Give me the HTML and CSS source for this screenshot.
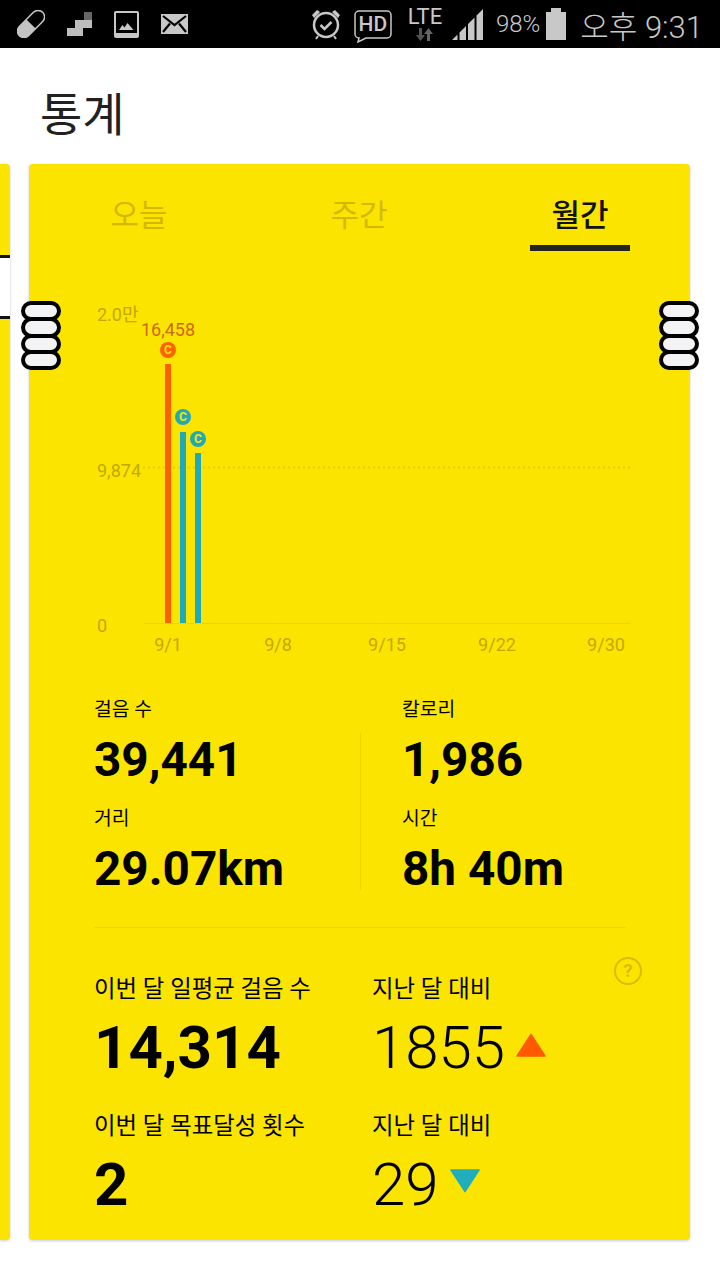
FILE: index.html
```html
<!DOCTYPE html>
<html lang="ko">
<head>
<meta charset="utf-8">
<title>통계</title>
<link rel="stylesheet" href="styles.css">
</head>
<body>
<div class="statusbar">
  <div class="status-left">
    <svg class="ic" width="28" height="28" viewBox="0 0 28 28"><g transform="rotate(-45 14 14)"><rect x="-2.500" y="7.500" width="33" height="13" rx="6.500" fill="none" stroke="#c8c8c8" stroke-width="1.500"/><path d="M14 7.500H4a6.500 6.500 0 0 0 0 13h10z" fill="#c4c4c4"/></g></svg>
    <svg class="ic" width="25" height="24" viewBox="0 0 25 24"><rect x="17" y="0" width="8" height="8" fill="#666"/><path d="M8 8h17v8h-9v8H0v-8h8z" fill="#bdbdbd"/></svg>
    <svg class="ic" width="25" height="27" viewBox="0 0 25 27"><rect x="1" y="1" width="23" height="25" rx="1" fill="none" stroke="#c8c8c8" stroke-width="2"/><rect x="1" y="22" width="23" height="4" fill="#c8c8c8"/><path d="M5 19l3.500-5 2 2.500 3-4.500 6 7z" fill="#c8c8c8"/></svg>
    <svg class="ic" width="27" height="20" viewBox="0 0 27 20"><rect width="27" height="20" fill="#c8c8c8"/><path d="M2 2l11.500 9L25 2M2 18l7-8.500M25 18l-7-8.500" fill="none" stroke="#000" stroke-width="2.200"/></svg>
  </div>
  <div class="status-right">
    <svg class="alarm" width="30" height="32" viewBox="0 0 30 32"><circle cx="15" cy="17" r="12" fill="none" stroke="#c8c8c8" stroke-width="2.500"/><path d="M1 7l5-5 3 2-6 6zM29 7l-5-5-3 2 6 6z" fill="#c8c8c8"/><path d="M9.500 17l4 4 7-7" fill="none" stroke="#c8c8c8" stroke-width="2.500"/><path d="M7 28l-2 3M23 28l2 3" stroke="#c8c8c8" stroke-width="2"/></svg>
    <div class="hd">
      <svg class="hd-bubble" width="38" height="33" viewBox="0 0 38 33"><path d="M5 1h28a4 4 0 0 1 4 4v19a4 4 0 0 1-4 4H12l-8 4 1-4a4 4 0 0 1-4-4V5a4 4 0 0 1 4-4z" fill="none" stroke="#c8c8c8" stroke-width="1.500"/></svg>
      <span class="hd-text">HD</span>
    </div>
    <div class="lte">
      <span class="lte-text">LTE</span>
      <svg width="17" height="13" viewBox="0 0 17 13"><path d="M4.500 13L0 7h3V0h3v7h3z" fill="#555"/><path d="M12.500 0L17 6h-3v7h-3V6H8z" fill="#666"/></svg>
    </div>
    <svg class="signal" width="31" height="31" viewBox="0 0 31 31"><path d="M0 31l5.500-5.500V31zM7.500 31v-7.500l6.500-6.500v14zM16 31V15l6.500-6.500V31zM24.500 31V6.500L31 0v31z" fill="#c8c8c8"/></svg>
    <span class="battery-pct">98%</span>
    <div class="battery"></div>
    <span class="clock">오후 9:31</span>
  </div>
</div>

<h1 class="title">통계</h1>

<div class="carousel">
  <div class="peek">
    <div class="peek-box"></div>
  </div>
  <main class="card">
    <nav class="tabs">
      <span class="tab">오늘</span>
      <span class="tab tab-mid">주간</span>
      <span class="tab tab-on">월간</span>
    </nav>

    <svg class="chart" width="661" height="400" viewBox="29 270 661 400">
      <line x1="143" y1="467.500" x2="630" y2="467.500" class="avg-line"/>
      <line x1="144" y1="623.500" x2="630" y2="623.500" class="base-line"/>
      <text x="97" y="321" class="axis">2.0만</text>
      <text x="97" y="477" class="axis">9,874</text>
      <text x="97" y="632" class="axis">0</text>
      <text x="168" y="336" class="peak" text-anchor="middle">16,458</text>
      <rect x="165" y="364" width="6" height="259" class="orange"/>
      <rect x="180" y="432" width="6" height="191" class="teal"/>
      <rect x="195" y="453" width="6" height="170" class="teal"/>
      <circle cx="168" cy="350" r="8" class="orange"/>
      <circle cx="183" cy="417" r="8" class="teal"/>
      <circle cx="198" cy="439" r="8" class="teal"/>
      <text x="168" y="354" class="coin" text-anchor="middle">C</text>
      <text x="183" y="421" class="coin" text-anchor="middle">C</text>
      <text x="198" y="443" class="coin" text-anchor="middle">C</text>
      <text x="168" y="651" class="axis" text-anchor="middle">9/1</text>
      <text x="278" y="651" class="axis" text-anchor="middle">9/8</text>
      <text x="387" y="651" class="axis" text-anchor="middle">9/15</text>
      <text x="497" y="651" class="axis" text-anchor="middle">9/22</text>
      <text x="606" y="651" class="axis" text-anchor="middle">9/30</text>
    </svg>

    <section class="totals">
      <div class="col">
        <div class="stat">
          <div class="label">걸음 수</div>
          <div class="value">39,441</div>
        </div>
        <div class="stat">
          <div class="label">거리</div>
          <div class="value">29.07km</div>
        </div>
      </div>
      <div class="vline"></div>
      <div class="col col-right">
        <div class="stat">
          <div class="label">칼로리</div>
          <div class="value">1,986</div>
        </div>
        <div class="stat">
          <div class="label">시간</div>
          <div class="value">8h 40m</div>
        </div>
      </div>
    </section>

    <section class="monthly">
      <svg class="help" width="28" height="28" viewBox="0 0 28 28"><circle cx="14" cy="14" r="13" fill="none" stroke="#d9bd00" stroke-width="2"/><text x="14" y="20" text-anchor="middle" class="help-mark">?</text></svg>
      <div class="m-row">
        <div class="m-first">
          <div class="m-label">이번 달 일평균 걸음 수</div>
          <div class="m-value">14,314</div>
        </div>
        <div>
          <div class="m-label">지난 달 대비</div>
          <div class="m-delta">1855
            <svg class="tri tri-up" width="30" height="24" viewBox="0 0 30 24"><path d="M15 1.500L29 23H1z" fill="#ff5a00" stroke="#ff5a00" stroke-width="1.500" stroke-linejoin="round"/></svg>
          </div>
        </div>
      </div>
      <div class="m-row">
        <div class="m-first">
          <div class="m-label">이번 달 목표달성 횟수</div>
          <div class="m-value">2</div>
        </div>
        <div>
          <div class="m-label">지난 달 대비</div>
          <div class="m-delta">29
            <svg class="tri tri-down" width="30" height="24" viewBox="0 0 30 24"><path d="M15 22.500L29 1H1z" fill="#20aebd" stroke="#20aebd" stroke-width="1.500" stroke-linejoin="round"/></svg>
          </div>
        </div>
      </div>
    </section>
  </main>
</div>

<div class="handle handle-left"><i></i><i></i><i></i><i></i></div>
<div class="handle handle-right"><i></i><i></i><i></i><i></i></div>
</body>
</html>
```
FILE: styles.css
```css
* { box-sizing: border-box; }

html, body { margin: 0; padding: 0; }

body {
  width: 720px;
  height: 1280px;
  position: relative;
  overflow: hidden;
  background: #fff;
  font-family: Roboto, "Noto Sans CJK KR", sans-serif;
  color: #000;
}

/* status bar */
.statusbar {
  height: 48px;
  background: #000;
  display: flex;
  justify-content: space-between;
  align-items: center;
  color: #c8c8c8;
  padding: 0 17px;
}
.status-left { display: flex; align-items: center; gap: 22px; }
.status-right { display: flex; align-items: center; }
.alarm { margin-right: 13px; }
.hd { position: relative; width: 38px; height: 33px; margin-right: 15px; margin-top: 4px; }
.hd-bubble { display: block; }
.hd-text {
  position: absolute;
  left: 0;
  top: 0;
  width: 38px;
  text-align: center;
  font-size: 21px;
  font-weight: 500;
  line-height: 29px;
}
.lte { display: flex; flex-direction: column; align-items: center; width: 36px; margin-right: 9px; }
.lte-text { font-size: 22px; font-weight: 400; line-height: 20px; }
.lte svg { margin-top: 1px; }
.signal { margin-right: 13px; }
.battery-pct { font-size: 24px; margin-right: 6px; font-weight: 300; }
.battery {
  width: 20px;
  height: 28px;
  margin-top: 4px;
  background: #c8c8c8;
  margin-right: 14px;
  position: relative;
}
.battery::before {
  content: "";
  position: absolute;
  left: 5px;
  top: -4px;
  width: 10px;
  height: 4px;
  background: #c8c8c8;
}
.clock { font-size: 31px; font-weight: 300; white-space: nowrap; }

/* page heading */
.title {
  margin: 0;
  height: 116px;
  padding: 36px 0 0 40px;
  font-size: 46px;
  line-height: 62px;
  font-weight: 400;
  color: #212121;
}

/* paged cards */
.carousel { display: flex; gap: 19px; height: 1076px; }
.peek {
  width: 10px;
  background: #fbe400;
  border-radius: 0 4px 4px 0;
  box-shadow: 0 1px 3px rgba(0,0,0,.2);
  padding-top: 91px;
}
.peek-box {
  height: 64px;
  background: #fff;
  border-top: 3px solid #111;
  border-bottom: 3px solid #111;
}
.card {
  width: 661px;
  background: #fbe400;
  border-radius: 4px;
  box-shadow: 0 1px 3px rgba(0,0,0,.2);
  display: flex;
  flex-direction: column;
}
.card > * { flex: none; }

/* tabs */
.tabs {
  height: 106px;
  padding: 24px 60px 0 50px;
  display: grid;
  grid-template-columns: 120px 1fr 100px;
}
.tab {
  font-size: 31px;
  line-height: 56px;
  height: 63px;
  font-weight: 400;
  color: #d4b800;
  text-align: center;
}
.tab-mid { padding-right: 11px; }
.tab-on { color: #111; font-weight: 500; border-bottom: 6px solid #25251f; }

/* chart */
.chart { display: block; margin-bottom: 26px; }
.axis { font-size: 18px; fill: #c2a90a; font-weight: 400; }
.peak { font-size: 18px; fill: #cf6a12; }
.coin { font-size: 12px; font-weight: 700; fill: #fbe400; }
.orange { fill: #ff6000; }
.teal { fill: #20aab8; }
.avg-line { stroke: #e6cc00; stroke-width: 2; stroke-dasharray: 2 3; }
.base-line { stroke: #eed500; stroke-width: 1; }

/* totals */
.totals {
  margin: 0 64px 0 65px;
  height: 232px;
  display: grid;
  grid-template-columns: 266px 1px 1fr;
  border-bottom: 1px solid #eed500;
}
.col { display: flex; flex-direction: column; }
.col-right { padding-left: 41px; }
.vline { height: 157px; margin-top: 37px; background: #eed500; }
.stat { height: 109px; }
.label { font-size: 19.300px; line-height: 28px; }
.value { font-size: 47.700px; font-weight: 700; line-height: 72px; }

/* monthly summary */
.monthly { padding: 43px 0 0 65px; position: relative; }
.help { position: absolute; right: 48px; top: 29px; }
.help-mark { font-size: 19px; font-weight: 700; fill: #d9bd00; }
.m-row { display: flex; height: 137px; }
.m-row + .m-row { height: 132px; }
.m-first { width: 278px; }
.m-label { font-size: 23.400px; line-height: 36px; }
.m-value { font-size: 60px; font-weight: 700; line-height: 82px; }
.m-delta { font-size: 60px; font-weight: 300; line-height: 82px; display: flex; align-items: center; gap: 11px; }
.tri-up { margin-bottom: 6px; }
.tri-down { margin-bottom: 8px; }

/* stacked rings over the card edges */
.handle {
  position: absolute;
  top: 301px;
  width: 40px;
  display: flex;
  flex-direction: column;
}
.handle-left { left: 21px; }
.handle-right { left: 659px; }
.handle i {
  display: block;
  height: 20.250px;
  margin-bottom: -4px;
  background: #f3f3f6;
  border: 4px solid #000;
  border-radius: 11px;
}
```
